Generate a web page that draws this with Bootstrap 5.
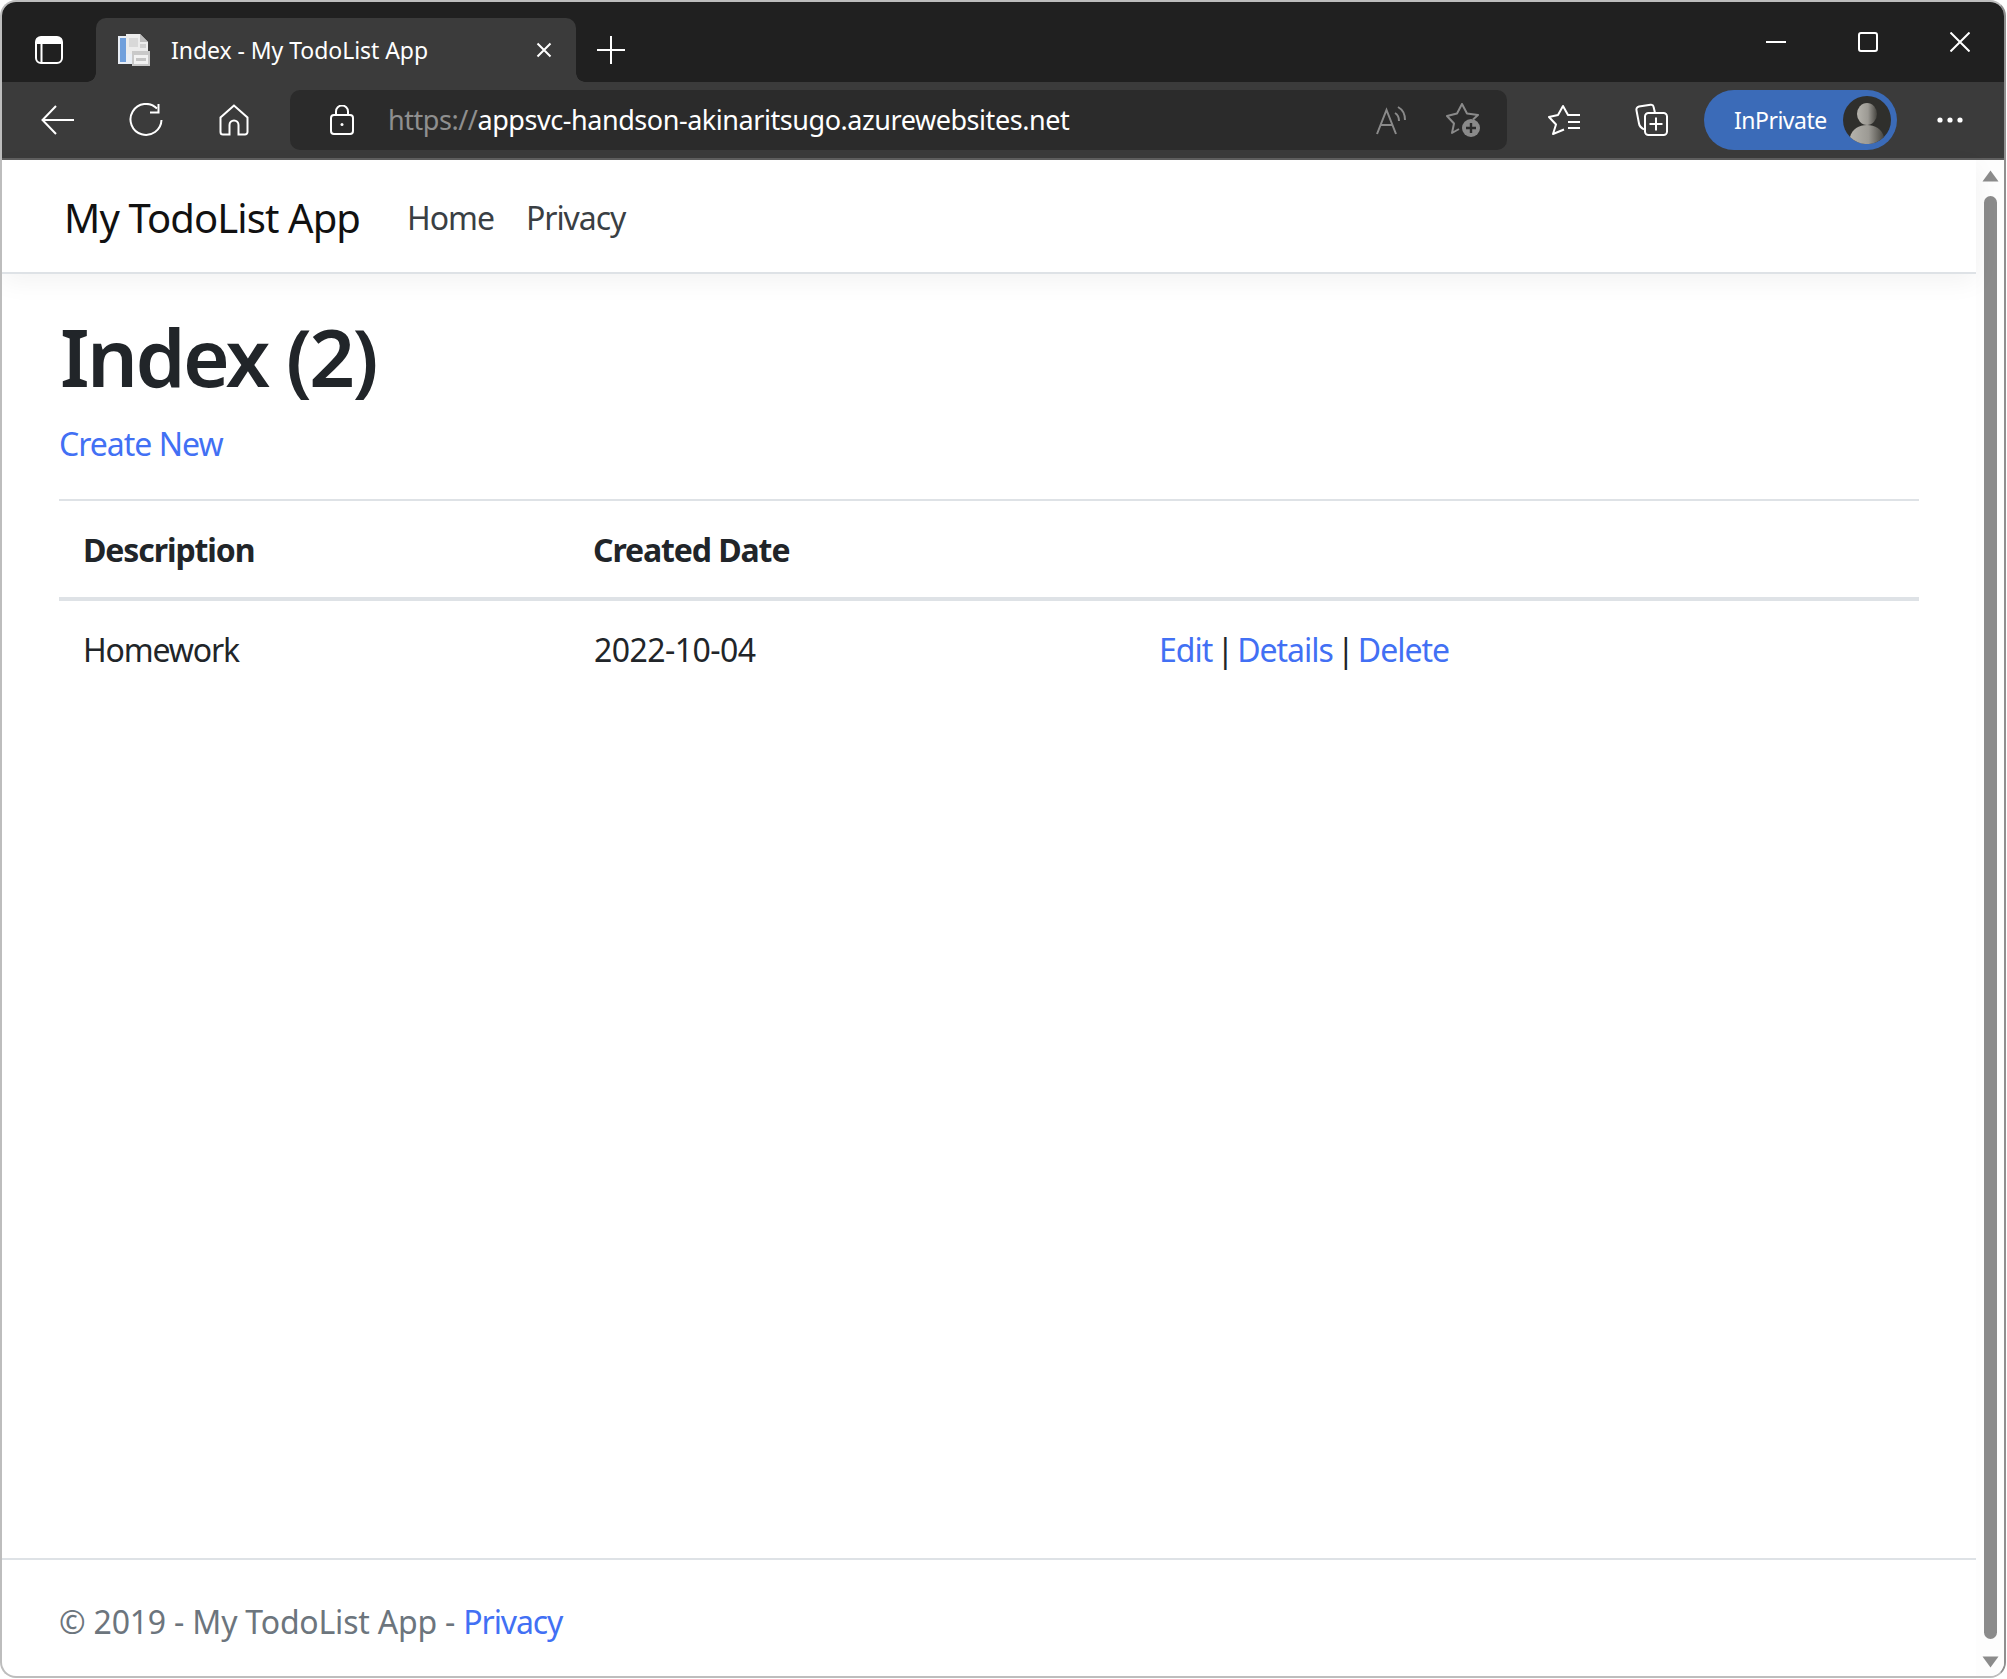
<!DOCTYPE html>
<html lang="en">
<head>
<meta charset="utf-8">
<title>Index - My TodoList App</title>
<link rel="stylesheet" href="https://cdn.jsdelivr.net/npm/bootstrap@5.3.0/dist/css/bootstrap.min.css">
<style>
html,body{height:100%;overflow:hidden;background:#fff;margin:0}
body{font-family:"Noto Sans","Open Sans",sans-serif;font-size:32px;color:#212529}
.win-frame{width:2006px;height:1678px;border:2px solid #bdbdbd;border-right-color:#8f8f8f;border-radius:16px;overflow:hidden}
.tab-strip{height:80px;background:#202020;flex:none}
.slot-first{width:94px;height:64px;margin-top:16px}
.browser-tab{width:480px;height:64px;margin-top:16px;background:#3b3b3b;border-radius:10px 10px 0 0;color:#fff;font-size:23px;letter-spacing:-.05px;padding-left:22px;padding-right:24px;position:relative}
.browser-tab::before,.browser-tab::after{content:"";position:absolute;bottom:0;width:9px;height:9px}
.browser-tab::before{left:-9px;background:radial-gradient(circle at 0 0,transparent 8.5px,#3b3b3b 9px)}
.browser-tab::after{right:-9px;background:radial-gradient(circle at 100% 0,transparent 8.5px,#3b3b3b 9px)}
.tab-title{margin-left:21px}
.slot-new{width:70px;height:64px;margin-top:16px}
.win-btns{gap:52px;padding-right:24px;margin-left:auto}
.win-btn{width:40px}
.tool-bar{height:78px;background:#3b3b3b;border-bottom:2px solid #5f5f5f;flex:none;padding-left:12px;padding-top:8px;padding-bottom:6px}
.tool-slot{width:88px;height:60px}
.url-bar{width:1217px;height:60px;background:#2b2b2b;border-radius:10px;margin-left:12px;margin-right:13px;padding-right:8px}
.lock-slot{width:104px;height:60px}
.url-text{color:#fff;font-size:27px;letter-spacing:-.45px;margin-left:-6px;white-space:nowrap}
.url-text span{color:#8f8f8f}
.url-slot{width:72px;height:60px}
.pill-btn{width:193px;height:60px;margin-left:8px;margin-right:9px;background:#3b6bb8;border-radius:30px;color:#fff;font-size:23px;letter-spacing:-.5px;padding-left:30px;padding-right:6px}
.page-pane{min-height:0}
.site-nav{height:114px;border-bottom:2px solid #dee2e6;box-shadow:0 8px 24px rgba(0,0,0,.05);padding:0;background:#fff;flex:none;position:relative}
.site-nav .container-fluid{padding-left:62px;padding-right:0;padding-top:4px;justify-content:flex-start;flex-wrap:nowrap}
.site-nav .navbar-brand{font-size:40px;letter-spacing:-.9px;color:#111;padding:0;margin-right:31px;line-height:60px}
.site-nav .navbar-nav .nav-link{font-size:32px;letter-spacing:-1.05px;color:#3a3f44;padding:0 16px;line-height:48px}
.site-main{padding:34px 57px 0 57px}
.page-title{font-size:80px;font-weight:600;line-height:96px;margin:0 0 16px 1px;letter-spacing:-2.6px;color:#212529}
.create-line{line-height:48px;margin:0 0 31px 0;letter-spacing:-1px}
a.page-link-blue{color:#4270f4;text-decoration:none}
.todo-table{margin:0;border-collapse:separate;border-spacing:0;border-top:2px solid #dee2e6;table-layout:fixed;width:100%;font-size:32px;letter-spacing:-1.15px}
.todo-table th,.todo-table td{padding:0 0 0 24px;border:0;color:#212529;vertical-align:middle}
.todo-table th{height:100px;padding-top:2px;font-weight:700;letter-spacing:-1.1px;border-bottom:4px solid #dee2e6}
.todo-table td{height:98px;color:#212529}
.todo-table td.cell-date{padding-left:25px;letter-spacing:-.55px}
.todo-table td.cell-acts{letter-spacing:-1px;word-spacing:-3.2px}
.col-desc{width:510px}
.col-date{width:566px}
.site-foot{height:118px;border-top:2px solid #dee2e6;flex:none;padding-left:57px;color:#6c757d;letter-spacing:-.2px;padding-top:7px}
.site-foot a{letter-spacing:-1.1px}
.scroll-rail{width:28px;background:#fdfdfd;flex:none;padding-top:10px}
.scroll-thumb{width:13px;height:1443px;background:#8b8b8b;border-radius:7px;margin-top:14px}
.scroll-arrow{height:12px;margin-top:17px}
</style>
</head>
<body>
<div class="win-frame d-flex flex-column">
  <div class="tab-strip d-flex">
    <div class="slot-first d-flex align-items-center justify-content-center">
      <svg width="28" height="28" viewBox="0 0 28 28" fill="none" stroke="#fff" stroke-width="2"><rect x="1" y="1" width="26" height="26" rx="5"/><path d="M1.500 5h25" stroke-width="6"/><path d="M6.500 7v20"/></svg>
    </div>
    <div class="browser-tab d-flex align-items-center">
      <svg width="32" height="32" viewBox="0 0 32 32"><path d="M0 2h14v28H0z" fill="#e9eef5"/><path d="M2 4h6v24H2z" fill="#6f9fdc"/><path d="M8 0h14l8 8v12H8z" fill="#ececec"/><path d="M22 0l8 8h-8z" fill="#bdbdbd"/><path d="M11 4h9v9h-9z" fill="#d8d8d8"/><path d="M22 10h6v4h-6z" fill="#d0d0d0"/><path d="M14 17h18v15H14z" fill="#c9c9c9"/><path d="M16 21h14v9H16z" fill="#f2f2f2"/><path d="M18 24h10v3H18z" fill="#c4c4c4"/></svg>
      <span class="tab-title flex-grow-1">Index - My TodoList App</span>
      <svg width="16" height="16" viewBox="0 0 16 16" stroke="#fff" stroke-width="2"><path d="M1.500 1.500l13 13M14.500 1.500l-13 13"/></svg>
    </div>
    <div class="slot-new d-flex align-items-center justify-content-center">
      <svg width="28" height="28" viewBox="0 0 28 28" stroke="#fff" stroke-width="2"><path d="M14 0v28M0 14h28"/></svg>
    </div>
    <div class="win-btns d-flex align-items-center">
      <div class="win-btn d-flex justify-content-center"><svg width="20" height="20" viewBox="0 0 20 20" stroke="#fff" stroke-width="2"><path d="M0 10h20"/></svg></div>
      <div class="win-btn d-flex justify-content-center"><svg width="20" height="20" viewBox="0 0 20 20" fill="none" stroke="#fff" stroke-width="2"><rect x="1" y="1" width="18" height="18" rx="2"/></svg></div>
      <div class="win-btn d-flex justify-content-center"><svg width="20" height="20" viewBox="0 0 20 20" stroke="#fff" stroke-width="2"><path d="M0.500 0.500l19 19M19.500 0.500l-19 19"/></svg></div>
    </div>
  </div>
  <div class="tool-bar d-flex">
    <div class="tool-slot d-flex align-items-center justify-content-center">
      <svg width="34" height="30" viewBox="0 0 34 30" fill="none" stroke="#fff" stroke-width="2"><path d="M33 15H2M15 1L1.500 15 15 29"/></svg>
    </div>
    <div class="tool-slot d-flex align-items-center justify-content-center">
      <svg width="34" height="34" viewBox="0 0 34 34" fill="none" stroke="#fff" stroke-width="2"><path d="M28 5.500A15.500 15.500 0 1 0 32.500 17"/><path d="M29.500 1v8.500H21"/></svg>
    </div>
    <div class="tool-slot d-flex align-items-center justify-content-center">
      <svg width="30" height="32" viewBox="0 0 30 32" fill="none" stroke="#fff" stroke-width="2"><path d="M15 1.500L1.500 13.500V28a2.500 2.500 0 0 0 2.500 2.500h6.500V21a4.500 4.500 0 0 1 9 0v9.500H26a2.500 2.500 0 0 0 2.500-2.500V13.500z"/></svg>
    </div>
    <div class="url-bar d-flex align-items-center">
      <div class="lock-slot d-flex align-items-center justify-content-center">
        <svg width="24" height="30" viewBox="0 0 24 30" fill="none" stroke="#fff" stroke-width="2"><rect x="1" y="10" width="22" height="19" rx="3"/><path d="M6 10V6.500a6 6 0 0 1 12 0V10"/><circle cx="12" cy="19.500" r="1.500" fill="#fff" stroke="none"/></svg>
      </div>
      <div class="url-text flex-grow-1"><span>https://</span>appsvc-handson-akinaritsugo.azurewebsites.net</div>
      <div class="url-slot d-flex align-items-center justify-content-center">
        <svg width="30" height="30" viewBox="0 0 30 30" fill="none" stroke="#8a8a8a" stroke-width="2"><path d="M1 29L10.500 5l9.500 24M4.500 20h12"/><path d="M19 8c2.500 1.500 4 4 4 8M22 2c4.500 2.500 7 7 7 13"/></svg>
      </div>
      <div class="url-slot d-flex align-items-center justify-content-center">
        <svg width="34" height="34" viewBox="0 0 34 34" fill="none" stroke="#8a8a8a" stroke-width="2" stroke-linejoin="round"><path d="M27 16.500L32 12 21 10.500 16 1 11 10.500 1 13l7 7.500L6 30l7-4"/><circle cx="25" cy="25" r="9" fill="#8a8a8a" stroke="none"/><path d="M25 20v10M20 25h10" stroke="#2b2b2b" stroke-width="2.400"/></svg>
      </div>
    </div>
    <div class="tool-slot d-flex align-items-center justify-content-center">
      <svg width="32" height="30" viewBox="0 0 32 30" fill="none" stroke="#fff" stroke-width="2" stroke-linejoin="round"><path d="M32 10H20L15 1 10 10 1 12l7 7.500L5 29l11-4.500"/><path d="M20 17h12M20 23h12"/></svg>
    </div>
    <div class="tool-slot d-flex align-items-center justify-content-center">
      <svg width="34" height="34" viewBox="0 0 34 34" fill="none" stroke="#fff" stroke-width="2" stroke-linejoin="round"><path d="M20 10L18.500 3.500c-.300-1.500-1.500-2-3-1.800L4 3.500C2 4 1 5.500 1.500 7.500l2.500 13c.300 2 1.500 4 5 6"/><rect x="10" y="10" width="22" height="22" rx="3.500"/><path d="M21 14.500v13M14.500 21h13"/></svg>
    </div>
    <div class="pill-btn d-flex align-items-center justify-content-between">
      <span>InPrivate</span>
      <svg width="48" height="48" viewBox="0 0 48 48">
        <defs><linearGradient id="avatarGrad" x1="0" y1="0" x2="1" y2="0"><stop offset="0" stop-color="#b5b3ac"/><stop offset=".55" stop-color="#9c9a94"/><stop offset="1" stop-color="#45443f"/></linearGradient></defs>
        <circle cx="24" cy="24" r="24" fill="#2f2f2c"/>
        <ellipse cx="24" cy="18" rx="10" ry="11" fill="url(#avatarGrad)"/>
        <path d="M7 41c2-8 9-12 17-12s15 4 17 12a24 24 0 0 1-34 0z" fill="url(#avatarGrad)"/>
      </svg>
    </div>
    <div class="tool-slot d-flex align-items-center justify-content-center">
      <svg width="26" height="6" viewBox="0 0 26 6" fill="#fff"><circle cx="3" cy="3" r="2.600"/><circle cx="13" cy="3" r="2.600"/><circle cx="23" cy="3" r="2.600"/></svg>
    </div>
  </div>
  <div class="page-pane d-flex flex-grow-1">
    <div class="d-flex flex-column flex-grow-1">
      <nav class="navbar navbar-expand site-nav">
        <div class="container-fluid">
          <a class="navbar-brand" href="#">My TodoList App</a>
          <ul class="navbar-nav">
            <li class="nav-item"><a class="nav-link" href="#">Home</a></li>
            <li class="nav-item"><a class="nav-link" href="#">Privacy</a></li>
          </ul>
        </div>
      </nav>
      <main class="site-main flex-grow-1">
        <h1 class="page-title">Index (2)</h1>
        <p class="create-line"><a class="page-link-blue" href="#">Create New</a></p>
        <table class="table todo-table">
          <thead><tr><th class="col-desc">Description</th><th class="col-date">Created Date</th><th></th></tr></thead>
          <tbody>
            <tr><td>Homework</td><td class="cell-date">2022-10-04</td><td class="cell-acts"><a class="page-link-blue" href="#">Edit</a> | <a class="page-link-blue" href="#">Details</a> | <a class="page-link-blue" href="#">Delete</a></td></tr>
          </tbody>
        </table>
      </main>
      <footer class="site-foot d-flex align-items-center">
        <div>© 2019 - My TodoList App - <a class="page-link-blue" href="#">Privacy</a></div>
      </footer>
    </div>
    <div class="scroll-rail d-flex flex-column align-items-center">
      <svg width="17" height="12" viewBox="0 0 17 12" fill="#8b8b8b"><path d="M8.500 0.500L16.500 11.500H0.500z"/></svg>
      <div class="scroll-thumb"></div>
      <svg class="scroll-arrow" width="17" height="12" viewBox="0 0 17 12" fill="#8b8b8b"><path d="M8.500 11.500L16.500 0.500H0.500z"/></svg>
    </div>
  </div>
</div>
<script src="https://cdn.jsdelivr.net/npm/bootstrap@5.3.0/dist/js/bootstrap.bundle.min.js"></script>
</body>
</html>
